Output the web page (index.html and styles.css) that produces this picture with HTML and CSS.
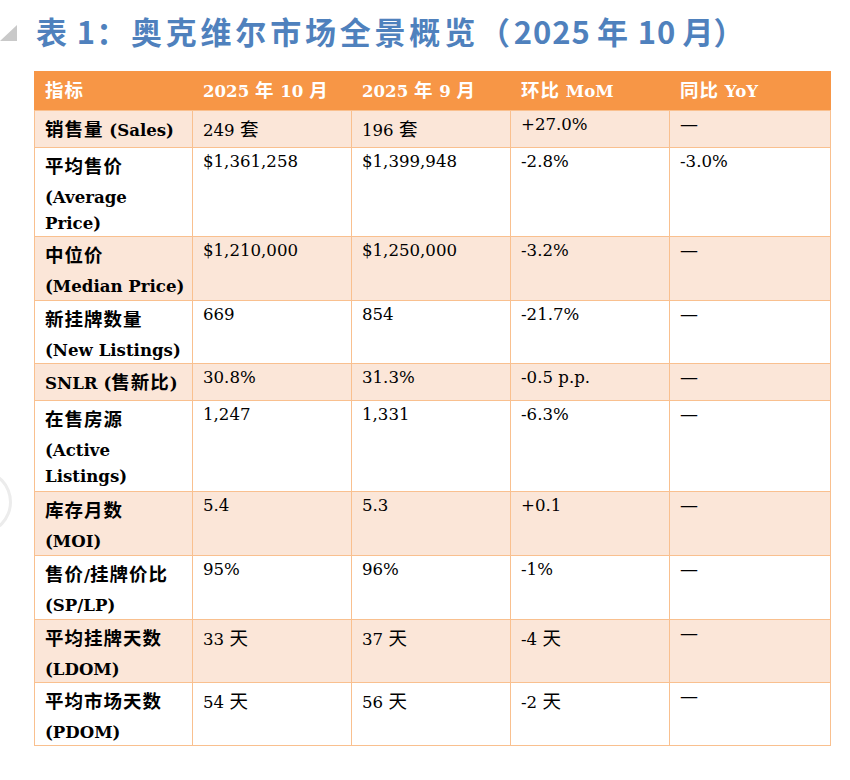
FILE: index.html
```html
<!DOCTYPE html>
<html lang="zh-CN">
<head>
<meta charset="utf-8">
<title>表 1：奥克维尔市场全景概览</title>
<link rel="stylesheet" href="styles.css">
</head>
<body>
<div class="page">
  <div class="ring"></div>
  <h1 class="title"><span class="tri"></span><span class="title-text"><span class="tz">表</span> 1<span class="tz">：奥克维尔市场全景概览（</span>2025 <span class="tz">年</span> 10 <span class="tz end">月）</span></span></h1>
  <table class="metrics">
    <colgroup>
      <col class="c1"><col class="c2"><col class="c3"><col class="c4"><col class="c5">
    </colgroup>
    <thead>
      <tr>
        <th><span class="zh">指标</span></th>
        <th>2025 <span class="zh">年</span> 10 <span class="zh">月</span></th>
        <th>2025 <span class="zh">年</span> 9 <span class="zh">月</span></th>
        <th><span class="zh">环比</span> MoM</th>
        <th><span class="zh">同比</span> YoY</th>
      </tr>
    </thead>
    <tbody>
      <tr class="shade">
        <td class="label"><span class="l1"><span class="zh">销售量</span> (Sales)</span></td>
        <td class="cj">249 <span class="zh">套</span></td>
        <td class="cj">196 <span class="zh">套</span></td>
        <td>+27.0%</td>
        <td class="dash">—</td>
      </tr>
      <tr>
        <td class="label"><span class="l1"><span class="zh">平均售价</span></span>(Average<br>Price)</td>
        <td>$1,361,258</td>
        <td>$1,399,948</td>
        <td>-2.8%</td>
        <td>-3.0%</td>
      </tr>
      <tr class="shade">
        <td class="label plus"><span class="l1"><span class="zh">中位价</span></span>(Median Price)</td>
        <td>$1,210,000</td>
        <td>$1,250,000</td>
        <td>-3.2%</td>
        <td class="dash">—</td>
      </tr>
      <tr>
        <td class="label"><span class="l1"><span class="zh">新挂牌数量</span></span>(New Listings)</td>
        <td>669</td>
        <td>854</td>
        <td>-21.7%</td>
        <td class="dash">—</td>
      </tr>
      <tr class="shade">
        <td class="label"><span class="l1">SNLR (<span class="zh">售新比</span>)</span></td>
        <td>30.8%</td>
        <td>31.3%</td>
        <td>-0.5 p.p.</td>
        <td class="dash">—</td>
      </tr>
      <tr>
        <td class="label tall"><span class="l1"><span class="zh">在售房源</span></span>(Active<br>Listings)</td>
        <td>1,247</td>
        <td>1,331</td>
        <td>-6.3%</td>
        <td class="dash">—</td>
      </tr>
      <tr class="shade">
        <td class="label plus"><span class="l1"><span class="zh">库存月数</span></span>(MOI)</td>
        <td>5.4</td>
        <td>5.3</td>
        <td>+0.1</td>
        <td class="dash">—</td>
      </tr>
      <tr>
        <td class="label plus"><span class="l1"><span class="zh">售价</span>/<span class="zh">挂牌价比</span></span>(SP/LP)</td>
        <td>95%</td>
        <td>96%</td>
        <td>-1%</td>
        <td class="dash">—</td>
      </tr>
      <tr class="shade">
        <td class="label"><span class="l1"><span class="zh">平均挂牌天数</span></span>(LDOM)</td>
        <td class="cj">33 <span class="zh">天</span></td>
        <td class="cj">37 <span class="zh">天</span></td>
        <td class="cj">-4 <span class="zh">天</span></td>
        <td class="dash">—</td>
      </tr>
      <tr>
        <td class="label"><span class="l1"><span class="zh">平均市场天数</span></span>(PDOM)</td>
        <td class="cj">54 <span class="zh">天</span></td>
        <td class="cj">56 <span class="zh">天</span></td>
        <td class="cj">-2 <span class="zh">天</span></td>
        <td class="dash">—</td>
      </tr>
    </tbody>
  </table>
</div>
</body>
</html>
```

FILE: styles.css
```css
html, body {
  margin: 0;
  padding: 0;
  background: #ffffff;
}

.page {
  position: relative;
  width: 850px;
  height: 780px;
  overflow: hidden;
}

.ring {
  position: absolute;
  left: -50px;
  top: 470px;
  width: 56px;
  height: 58px;
  border: 3px solid #ececec;
  border-radius: 50%;
}

.title {
  display: flex;
  align-items: flex-start;
  gap: 19px;
  margin: 0;
  padding-top: 8px;
  height: 46px;
}

.tri {
  width: 17px;
  height: 16px;
  margin-top: 17px;
  background: #c9c9c9;
  clip-path: polygon(100% 0, 100% 100%, 0 100%);
}

.title-text {
  font-family: "Noto Sans CJK SC", "Noto Sans", sans-serif;
  font-weight: 700;
  font-size: 31px;
  line-height: 46px;
  letter-spacing: 1px;
  word-spacing: -2px;
  color: #4f81bd;
  white-space: nowrap;
}

.title-text .tz {
  letter-spacing: 3.8px;
}

.title-text .tz.end {
  letter-spacing: 0;
}

.metrics {
  margin: 17px 0 0 34px;
  border-collapse: collapse;
  table-layout: fixed;
  width: 796px;
  font-family: "DejaVu Serif", "Liberation Serif", serif;
  font-size: 16.6px;
  color: #000000;
}

.c1 { width: 158px; }
.c2 { width: 159px; }
.c3 { width: 159px; }
.c4 { width: 159px; }
.c5 { width: 161px; }

.metrics th {
  background: #f79646;
  color: #ffffff;
  font-weight: 700;
  text-align: left;
  line-height: 33px;
  padding: 3px 10px 2px;
  border: 1px solid #f79646;
  border-bottom-color: #f9c08f;
  white-space: nowrap;
}

.metrics td {
  border: 1px solid #f9c08f;
  vertical-align: top;
  text-align: left;
  padding: 1px 10px 0;
  line-height: 26px;
  white-space: nowrap;
}

.metrics td.cj {
  padding-top: 3px;
  line-height: 33px;
}

.metrics td.label {
  font-weight: 700;
  padding-top: 3px;
  padding-bottom: 0;
}

.metrics td.label.plus {
  padding-bottom: 1px;
}

.metrics td.label.tall {
  padding-bottom: 2px;
}

.metrics td.dash {
  font-size: 18px;
}

.l1 {
  display: block;
  height: 33px;
  line-height: 33px;
}

.shade td {
  background: #fbe6d8;
}

.zh {
  font-family: "Noto Sans CJK SC", sans-serif;
  font-size: 18.5px;
  line-height: 1;
  letter-spacing: 1px;
}

.metrics td .zh {
  font-weight: 400;
}

.metrics td.label .zh,
.metrics th .zh {
  font-weight: 700;
}
```
